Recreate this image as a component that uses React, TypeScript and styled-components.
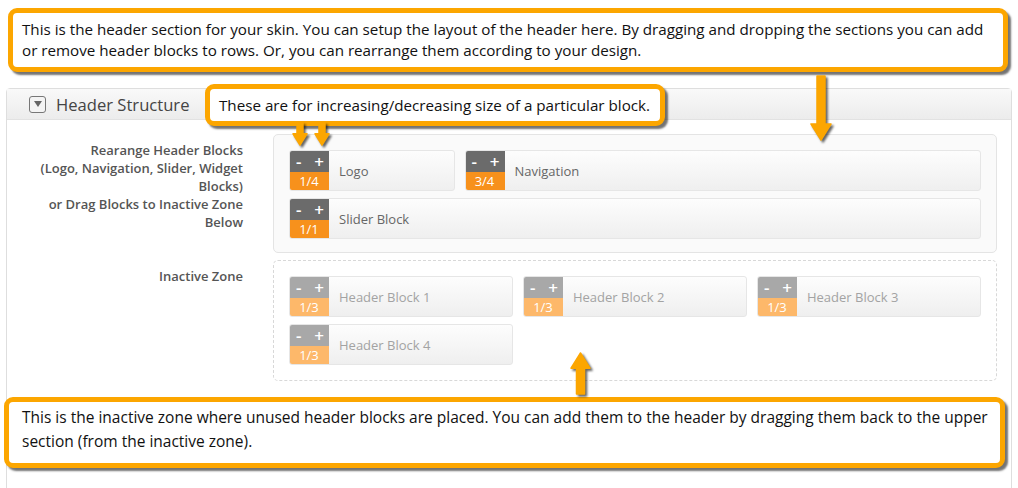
import React from "react";
import styled, { createGlobalStyle } from "styled-components";

interface BlockData {
  name: string;
  size: number;
  label: string;
}

const activeBlocks: BlockData[] = [
  { name: "Logo", size: 1 / 4, label: "1/4" },
  { name: "Navigation", size: 3 / 4, label: "3/4" },
  { name: "Slider Block", size: 1, label: "1/1" },
];

const inactiveBlocks: BlockData[] = [
  { name: "Header Block 1", size: 1 / 3, label: "1/3" },
  { name: "Header Block 2", size: 1 / 3, label: "1/3" },
  { name: "Header Block 3", size: 1 / 3, label: "1/3" },
  { name: "Header Block 4", size: 1 / 3, label: "1/3" },
];

const ORANGE = "#fca600";

const Block = ({ data, inactive }: { data: BlockData; inactive?: boolean }) => (
  <BlockBox $size={data.size}>
    <Control>
      <Buttons $inactive={inactive}>
        <span>-</span>
        <span>+</span>
      </Buttons>
      <SizeLabel $inactive={inactive}>{data.label}</SizeLabel>
    </Control>
    <BlockName $inactive={inactive}>{data.name}</BlockName>
  </BlockBox>
);

// arrow drawn pointing down; flip for up
const Arrow = ({
  x,
  y,
  len,
  head,
  shaft,
  up,
}: {
  x: number;
  y: number;
  len: number;
  head: number;
  shaft: number;
  up?: boolean;
}) => {
  const w = head + 4;
  const c = w / 2;
  const hl = head * 0.8;
  const d = `M ${c - shaft / 2} 1 L ${c + shaft / 2} 1 L ${c + shaft / 2} ${len - hl} L ${
    c + head / 2
  } ${len - hl} L ${c} ${len} L ${c - head / 2} ${len - hl} L ${c - shaft / 2} ${len - hl} Z`;
  return (
    <ArrowSvg $x={x - c} $y={y} $up={up} width={w} height={len + 2} viewBox={`0 0 ${w} ${len + 2}`}>
      <path d={d} fill={ORANGE} strokeLinejoin="round" stroke={ORANGE} strokeWidth={1.5} />
    </ArrowSvg>
  );
};

const App = () => {
  return (
    <>
      <GlobalStyle />
      <Page>
        <TopCallout>
          This is the header section for your skin. You can setup the layout of the header here. By dragging and
          dropping the sections you can add or remove header blocks to rows. Or, you can rearrange them according to
          your design.
        </TopCallout>

        <Panel>
          <PanelHeader>
            <ToggleIcon>
              <svg width="8" height="6" viewBox="0 0 8 6">
                <path d="M0 0 L8 0 L4 6 Z" fill="#666" />
              </svg>
            </ToggleIcon>
            <PanelTitle>Header Structure</PanelTitle>
          </PanelHeader>
          <PanelBody>
            <FieldLabel>
              Rearange Header Blocks
              <br />
              (Logo, Navigation, Slider, Widget Blocks)
              <br />
              or Drag Blocks to Inactive Zone Below
            </FieldLabel>
            <ActiveZone>
              {activeBlocks.map((b) => (
                <Block key={b.name} data={b} />
              ))}
            </ActiveZone>

            <FieldLabel>Inactive Zone</FieldLabel>
            <InactiveZone>
              {inactiveBlocks.map((b) => (
                <Block key={b.name} data={b} inactive />
              ))}
            </InactiveZone>
          </PanelBody>
        </Panel>

        <SizeCallout>These are for increasing/decreasing size of a particular block.</SizeCallout>

        <BottomCallout>
          This is the inactive zone where unused header blocks are placed. You can add them to the header by dragging
          them back to the upper section (from the inactive zone).
        </BottomCallout>

        <Arrow x={300} y={122} len={23} head={14} shaft={6} />
        <Arrow x={322} y={122} len={23} head={14} shaft={6} />
        <Arrow x={821} y={75} len={65} head={20} shaft={8} />
        <Arrow x={580} y={351} len={42} head={19} shaft={8} up />
      </Page>
    </>
  );
};

const GlobalStyle = createGlobalStyle`
  body {
    margin: 0;
    background: #fff;
    font-family: "Open Sans", "Noto Sans", sans-serif;
  }
`;

const Page = styled.div`
  position: relative;
  width: 1018px;
  height: 488px;
  overflow: hidden;
  padding-top: 8px;
  box-sizing: border-box;
`;

const Callout = styled.div`
  box-sizing: border-box;
  background: #fff;
  border: 5px solid ${ORANGE};
  border-radius: 9px;
  box-shadow: 3px 3px 2px rgba(0, 0, 0, 0.55);
  color: #111;
  font-family: "Open Sans", "Noto Sans", sans-serif;
  font-size: 15.2px;
`;

const TopCallout = styled(Callout)`
  width: 1000px;
  height: 64px;
  margin-left: 8px;
  padding: 6px 9px;
  line-height: 21px;
`;

const SizeCallout = styled(Callout)`
  position: absolute;
  left: 205px;
  top: 84px;
  width: 460px;
  height: 42px;
  padding: 0 9px;
  line-height: 32px;
`;

const BottomCallout = styled(Callout)`
  position: absolute;
  left: 4px;
  top: 397px;
  width: 1001px;
  height: 71px;
  padding: 3px 2px 3px 13px;
  line-height: 24px;
  font-size: 15.5px;
`;

const ArrowSvg = styled.svg<{ $x: number; $y: number; $up?: boolean }>`
  position: absolute;
  left: ${(p) => p.$x}px;
  top: ${(p) => p.$y}px;
  transform: ${(p) => (p.$up ? "scaleY(-1)" : "none")};
  filter: drop-shadow(${(p) => (p.$up ? "2px -2px" : "2px 2px")} 1px rgba(0, 0, 0, 0.6));
`;

const Panel = styled.div`
  margin: 16px 0 0 6px;
  width: 1006px;
  height: 420px;
  border: 1px solid #dedede;
  border-radius: 4px 4px 0 0;
  box-sizing: border-box;
`;

const PanelHeader = styled.div`
  display: flex;
  align-items: center;
  gap: 10px;
  height: 30px;
  padding-left: 22px;
  background: linear-gradient(#f9f9f9, #ececec);
  border-bottom: 1px solid #e2e2e2;
`;

const ToggleIcon = styled.div`
  display: flex;
  align-items: center;
  justify-content: center;
  width: 15px;
  height: 15px;
  border: 1.5px solid #777;
  border-radius: 3px;
  background: #f4f4f4;
`;

const PanelTitle = styled.div`
  font-size: 16.6px;
  color: #444;
`;

const PanelBody = styled.div`
  display: grid;
  grid-template-columns: 236px 724px;
  column-gap: 30px;
  row-gap: 7px;
  padding: 14px 0 0 0;
`;

const FieldLabel = styled.div`
  padding: 7px 0 0 22px;
  text-align: right;
  font-size: 13px;
  font-weight: 600;
  line-height: 18px;
  color: #555;
`;

const Zone = styled.div`
  display: flex;
  flex-wrap: wrap;
  column-gap: 10px;
  row-gap: 7px;
  align-content: flex-start;
  padding: 15px;
  border-radius: 5px;
  box-sizing: border-box;
`;

const ActiveZone = styled(Zone)`
  height: 119px;
  border: 1px solid #e4e4e4;
  background: #fafafa;
`;

const InactiveZone = styled(Zone)`
  height: 121px;
  border: 1px dashed #d8d8d8;
  background: #fff;
`;

const BlockBox = styled.div<{ $size: number }>`
  display: flex;
  width: calc(${(p) => p.$size} * (100% + 10px) - 10px);
  height: 41px;
  box-sizing: border-box;
  border: 1px solid #e6e6e6;
  border-radius: 3px;
  background: linear-gradient(#fdfdfd, #efefef);
  overflow: hidden;
`;

const Control = styled.div`
  display: flex;
  flex-direction: column;
  width: 40px;
  flex-shrink: 0;
  margin: -1px 0 -1px -1px;
`;

const Buttons = styled.div<{ $inactive?: boolean }>`
  display: flex;
  justify-content: space-between;
  align-items: center;
  height: 22px;
  padding: 0 5px 0 7px;
  background: ${(p) => (p.$inactive ? "#a8a8a8" : "#6b6b6b")};
  color: #fff;
  font-size: 17px;
  font-weight: 600;
  line-height: 1;
`;

const SizeLabel = styled.div<{ $inactive?: boolean }>`
  height: 19px;
  background: ${(p) => (p.$inactive ? "#fdb86a" : "#f7911c")};
  color: #fff;
  font-size: 13px;
  line-height: 19px;
  text-align: center;
`;

const BlockName = styled.div<{ $inactive?: boolean }>`
  align-self: center;
  padding-left: 10px;
  font-size: 13px;
  color: ${(p) => (p.$inactive ? "#a3a3a3" : "#666")};
`;

export default App;
